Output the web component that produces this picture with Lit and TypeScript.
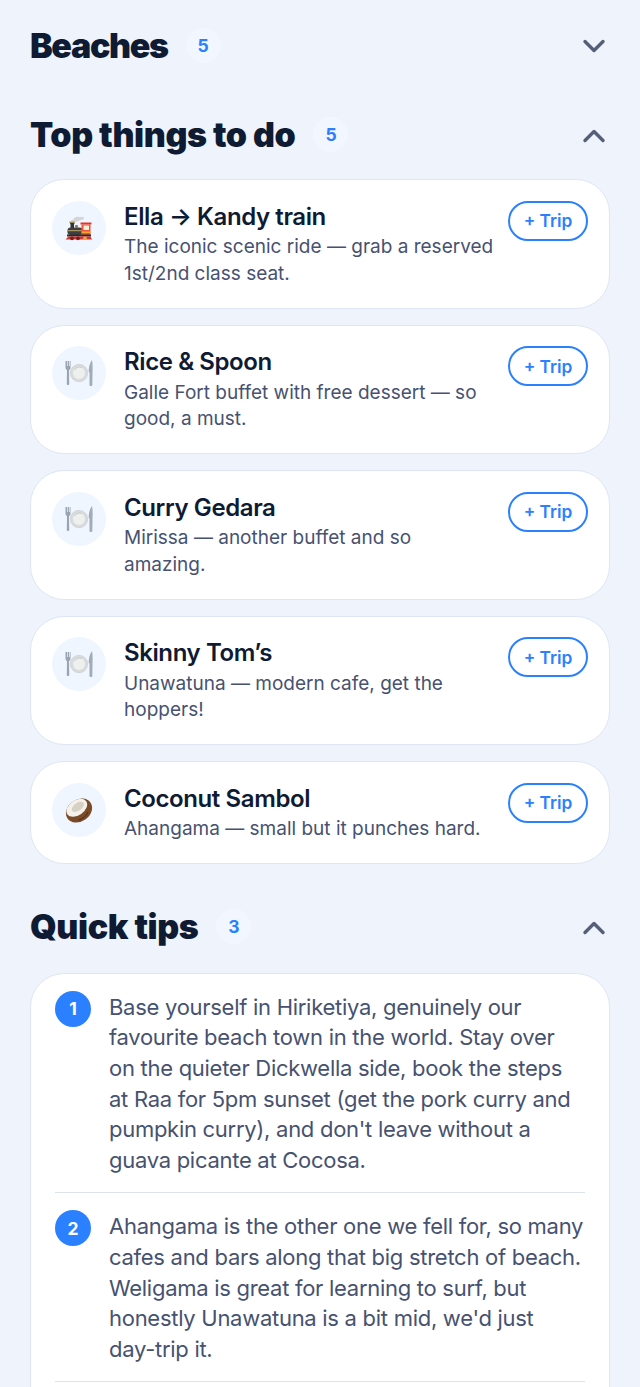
import { LitElement, html, css, svg } from "lit";
import { customElement } from "lit/decorators.js";

const train = svg`<svg viewBox="0 0 30 30" width="30" height="30">
  <path d="M7.500 9.500C6 8 7.500 6.500 9.500 6.500 9.500 4.500 13 3 15.500 4.200 18 3 20.500 4 20 5.500c-.5 1.500-3.500 1.200-5 2.200-1.500 1-2.500 1-4 1-1.500 0-2.500.5-3.500.8z" fill="#d5d5d8"/>
  <path d="M5.500 9h5.500l-1 2.500V15H6.500v-3.500z" fill="#333335"/><rect x="5.500" y="8.500" width="5.500" height="1.300" fill="#b9a36a"/>
  <rect x="3.500" y="14.500" width="15" height="7.500" rx="3" fill="#3f3f42"/><rect x="3.500" y="17" width="15" height="1.200" fill="#a89564"/>
  <rect x="11" y="12" width="3" height="3" rx="1" fill="#8c7a4a"/>
  <rect x="16.500" y="9.500" width="11" height="2" fill="#e5352b"/><rect x="17.500" y="11.500" width="9" height="10.500" fill="#f0523a"/>
  <rect x="19.500" y="12.500" width="5.500" height="4.500" fill="#f5eed8"/><rect x="17.500" y="18.500" width="9" height="1.500" fill="#f7a531"/>
  <rect x="3" y="21.500" width="24" height="2" fill="#2c2c2e"/>
  <path d="M1.500 26.500l3-3h22l1.500 3z" fill="#d8322c"/>
  <circle cx="8" cy="25.300" r="1.900" fill="#7d1d1a"/><circle cx="14" cy="25.300" r="1.900" fill="#7d1d1a"/><circle cx="21" cy="25.300" r="1.900" fill="#f2a43a"/>
</svg>`;

const plate = svg`<svg viewBox="0 0 30 30" width="30" height="30">
  <path d="M1.500 3v6.500c0 1.500 1 2.300 1.500 2.800L2.800 26c0 1.300 2.400 1.300 2.400 0L5 12.300c.6-.5 1.500-1.300 1.500-2.800V3h-.8v5h-.7V3h-1v5h-.7V3z" fill="#98a4b2"/>
  <circle cx="15" cy="15" r="8.700" fill="#d9dbdc" stroke="#c2c5c7" stroke-width=".5"/>
  <circle cx="15" cy="15" r="6" fill="#eeefef"/><path d="M10.500 12a5.500 5.500 0 0 1 7-2.500" stroke="#b9bcbe" stroke-width=".7" fill="none"/>
  <path d="M25.500 27V14.500l-.8-.5c0-5 1-9 3.300-12 .6 3 .8 7 .5 12.500l-.2 12.500c0 1.300-2.800 1.300-2.800 0z" fill="#a0acb8"/>
</svg>`;

const coconut = svg`<svg viewBox="0 0 30 30" width="30" height="30">
  <ellipse cx="15" cy="15.500" rx="14" ry="11" transform="rotate(-35 15 15.500)" fill="#7b4a28"/>
  <ellipse cx="12.800" cy="12.800" rx="11.500" ry="7.600" transform="rotate(-35 12.800 12.800)" fill="#f4f1ea"/>
  <ellipse cx="13.800" cy="11.800" rx="7" ry="3.800" transform="rotate(-35 13.800 11.800)" fill="#d6d1c4"/>
  <path d="M24 17c-1.500 4-5 7-9.500 8" stroke="#4f2d17" stroke-width="1" fill="none"/>
</svg>`;

const chevron = (up: boolean) => svg`<svg class="chev" viewBox="0 0 24 16" width="24" height="16"><path d="${up ? "M3 13.500 12 4.500l9 9" : "M3 3.500l9 9 9-9"}" fill="none" stroke="#565f78" stroke-width="3.400" stroke-linecap="round" stroke-linejoin="round"/></svg>`;

@customElement("place-card")
class PlaceCard extends LitElement {
  static properties = { name: {}, desc: {}, kind: {} };
  name = ""; desc = ""; kind = "";
  static styles = css`
    :host { display: block; }
    .card { display: flex; align-items: flex-start; background: #fff; border: 1px solid #dfe6f3; border-radius: 34px; padding: 20.500px 21px 20.700px; }
    .ico { flex: none; width: 54px; height: 54px; border-radius: 50%; background: #f0f6ff; display: flex; align-items: center; justify-content: center; margin-right: 18px; }
    .body { flex: 1; min-width: 0; padding-right: 13px; }
    .name { font-size: 24px; line-height: 32px; font-weight: 600; color: #0f1b33; letter-spacing: -.4px; margin-bottom: 1.300px; }
    .desc { font-size: 19px; line-height: 26.500px; color: #475270; }
    .btn { flex: none; box-sizing: border-box; width: 80px; height: 40px; border: 2px solid #2b80ff; border-radius: 20px; color: #2b80ff; font-size: 17.300px; font-weight: 600; display: flex; align-items: center; justify-content: center; background: #fff; }
  `;
  render() {
    const icon = this.kind === "train" ? train : this.kind === "coconut" ? coconut : plate;
    return html`<div class="card">
      <div class="ico">${icon}</div>
      <div class="body"><div class="name">${this.name}</div><div class="desc">${this.desc}</div></div>
      <div class="btn">+ Trip</div>
    </div>`;
  }
}

@customElement("app-root")
class AppRoot extends LitElement {
  static styles = css`
    :host { display: block; height: 1387px; overflow: hidden; background: #eef3fc; font-family: Inter, "Liberation Sans", sans-serif; }
    .page { padding: 23.400px 30px 0; }
    .sec { margin-bottom: 40px; }
    .sec.closed { margin-bottom: 44px; }
    .head { display: flex; align-items: center; height: 45px; margin-bottom: 22px; }
    .sec.closed .head { margin-bottom: 0; }
    .head.tight { margin-bottom: 23.500px; }
    h2 { margin: 0; font-size: 34px; font-weight: 900; color: #0f1b33; letter-spacing: -.4px; line-height: 45px; }
    .sec.closed h2 { letter-spacing: -1.350px; }
    .count { width: 35px; height: 35px; border-radius: 50%; background: #f2f7ff; color: #2b80ff; font-size: 17.500px; font-weight: 700; display: flex; align-items: center; justify-content: center; margin-left: 18px; }
    .chev-wrap { margin-left: auto; margin-right: 4px; display: flex; }
    .list { display: flex; flex-direction: column; gap: 16px; }
    .tips { background: #fff; border: 1px solid #dfe6f3; border-radius: 34px; padding: 17px 24px 60px; }
    .tip { display: flex; padding-bottom: 17px; border-bottom: 1px solid #dfe3ec; margin-bottom: 17px; }
    .num { flex: none; width: 36px; height: 36px; border-radius: 50%; background: #2b80ff; color: #fff; font-size: 17.500px; font-weight: 700; display: flex; align-items: center; justify-content: center; margin-right: 18px; }
    .txt { font-size: 22px; line-height: 30.600px; color: #475270; letter-spacing: -.28px; padding: 1px 1px 0 0; }
    .nb { white-space: nowrap; }
  `;
  render() {
    const head = (t: string, n: number, up: boolean, tight = false) => html`<div class="head ${tight ? "tight" : ""}"><h2>${t}</h2><div class="count">${n}</div><div class="chev-wrap">${chevron(up)}</div></div>`;
    return html`<div class="page">
      <div class="sec closed">${head("Beaches", 5, false)}</div>
      <div class="sec">${head("Top things to do", 5, true)}
        <div class="list">
          <place-card kind="train" name="Ella → Kandy train" desc="The iconic scenic ride — grab a reserved 1st/2nd class seat."></place-card>
          <place-card kind="plate" name="Rice & Spoon" desc="Galle Fort buffet with free dessert — so good, a must."></place-card>
          <place-card kind="plate" name="Curry Gedara" desc="Mirissa — another buffet and so amazing."></place-card>
          <place-card kind="plate" name="Skinny Tom’s" desc="Unawatuna — modern cafe, get the hoppers!"></place-card>
          <place-card kind="coconut" name="Coconut Sambol" desc="Ahangama — small but it punches hard."></place-card>
        </div>
      </div>
      <div class="sec">${head("Quick tips", 3, true, true)}
        <div class="tips">
          <div class="tip"><div class="num">1</div><div class="txt">Base yourself in Hiriketiya, genuinely our favourite beach town in the world. Stay over on the quieter Dickwella side, book the steps at Raa for 5pm sunset (get the pork curry and pumpkin curry), and don't leave without a guava picante at Cocosa.</div></div>
          <div class="tip"><div class="num">2</div><div class="txt">Ahangama is the other one we fell for, so many cafes and bars along that big stretch of beach. Weligama is great for learning to surf, but honestly Unawatuna is a bit mid, we'd just <span class="nb">day-trip</span> it.</div></div>
        </div>
      </div>
    </div>`;
  }
}
